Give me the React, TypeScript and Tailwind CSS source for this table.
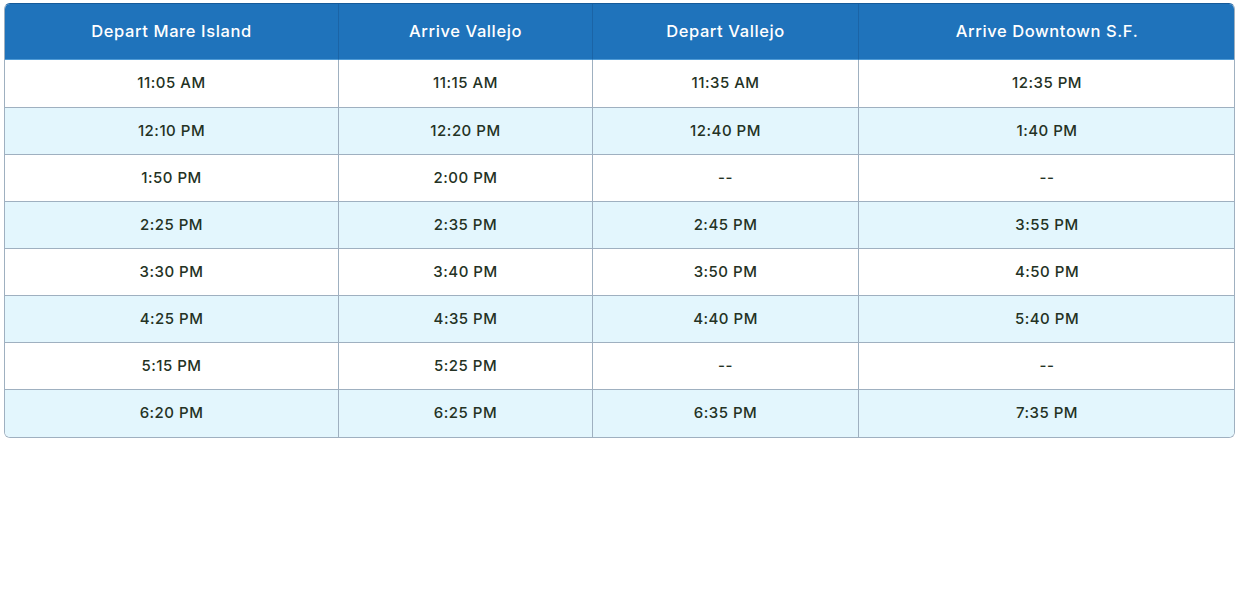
import React from 'react';

const headers = ['Depart Mare Island', 'Arrive Vallejo', 'Depart Vallejo', 'Arrive Downtown S.F.'];

const rows: string[][] = [
  ['11:05 AM', '11:15 AM', '11:35 AM', '12:35 PM'],
  ['12:10 PM', '12:20 PM', '12:40 PM', '1:40 PM'],
  ['1:50 PM', '2:00 PM', '--', '--'],
  ['2:25 PM', '2:35 PM', '2:45 PM', '3:55 PM'],
  ['3:30 PM', '3:40 PM', '3:50 PM', '4:50 PM'],
  ['4:25 PM', '4:35 PM', '4:40 PM', '5:40 PM'],
  ['5:15 PM', '5:25 PM', '--', '--'],
  ['6:20 PM', '6:25 PM', '6:35 PM', '7:35 PM'],
];

const colWidths = ['w-[333px]', 'w-[254px]', 'w-[266px]', 'w-[377px]'];

export default function App() {
  return (
    <div className="w-[1240px] h-[600px] bg-white pt-[3px] px-[4px] font-['Inter','Liberation_Sans',sans-serif]">
      <div className="w-[1231px] rounded-[6px] border border-[#9fb0c0] border-t-[#155a99] overflow-hidden">
        <table className="w-full border-separate border-spacing-0 table-fixed">
          <thead>
            <tr className="bg-[#1f73bb]">
              {headers.map((h, i) => (
                <th
                  key={h}
                  className={`${colWidths[i]} h-[56px] text-center text-[16.5px] tracking-[0.6px] font-medium text-white border-b border-[#4f9bd6] ${
                    i > 0 ? 'border-l border-l-[#1b64a6]' : ''
                  }`}
                >
                  {h}
                </th>
              ))}
            </tr>
          </thead>
          <tbody>
            {rows.map((r, ri) => (
              <tr key={ri} className={ri % 2 === 1 ? 'bg-[#e3f6fd]' : 'bg-white'}>
                {r.map((c, ci) => (
                  <td
                    key={ci}
                    className={`${ri === rows.length - 1 ? 'h-[48px]' : 'h-[47px]'} text-center text-[15px] tracking-[0.5px] font-medium text-[#243224] ${
                      ri > 0 ? 'border-t border-[#9fb0c0]' : ''
                    } ${ci > 0 ? 'border-l border-[#9fb0c0]' : ''}`}
                  >
                    {c}
                  </td>
                ))}
              </tr>
            ))}
          </tbody>
        </table>
      </div>
    </div>
  );
}
